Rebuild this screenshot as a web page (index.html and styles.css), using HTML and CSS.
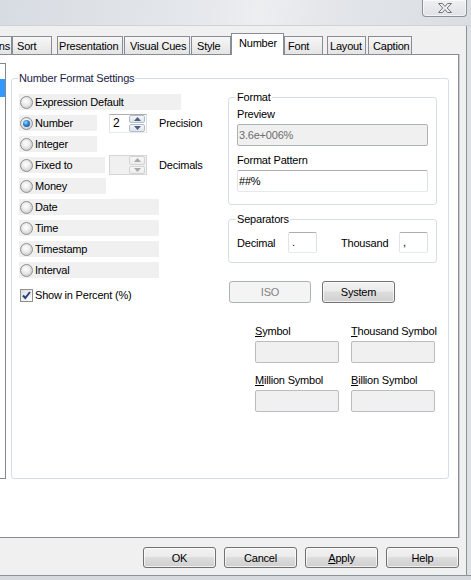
FILE: index.html
```html
<!DOCTYPE html>
<html>
<head>
<meta charset="utf-8">
<title>Number</title>
<link rel="stylesheet" href="styles.css">
</head>
<body>
<div class="window">
  <div class="titlebar">
    <div class="close">
      <svg width="14" height="10" viewBox="0 0 14 10"><path d="M0.5 0.5H4.5L7 3.5L9.5 0.5H13.5L9.2 5L13.5 9.5H9.5L7 6.5L4.5 9.5H0.5L4.8 5Z" fill="#eef0f2" stroke="#6f747b" stroke-width="1"/></svg>
    </div>
  </div>
  <div class="client">
    <div class="client-main">
      <div class="tabs">
        <div class="tab t-expr">Expressions</div>
        <div class="tab t-sort">Sort</div>
        <div class="tab t-pres">Presentation</div>
        <div class="tab t-vis">Visual Cues</div>
        <div class="tab t-style">Style</div>
        <div class="tab tab-active t-num">Number</div>
        <div class="tab t-font">Font</div>
        <div class="tab t-layout">Layout</div>
        <div class="tab t-cap">Caption</div>
      </div>
      <div class="page">
        <div class="listfrag"><div class="sel"></div></div>
        <div class="group main-group">
          <span class="group-title gt-main">Number Format Settings</span>
          <div class="left-col">
            <div class="row"><span class="opt w-expr"><span class="radio"></span>Expression Default</span></div>
            <div class="row">
              <span class="opt w-num"><span class="radio on"></span>Number</span>
              <div class="spin spin-num">
                <span class="spin-val">2</span>
                <span class="spin-btns">
                  <span class="spin-btn"><svg width="7" height="4" viewBox="0 0 7 4"><path d="M0 4L3.5 0L7 4Z"/></svg></span>
                  <span class="spin-btn"><svg width="7" height="4" viewBox="0 0 7 4"><path d="M0 0L3.5 4L7 0Z"/></svg></span>
                </span>
              </div>
              <span class="spin-label">Precision</span>
            </div>
            <div class="row"><span class="opt w-int"><span class="radio"></span>Integer</span></div>
            <div class="row">
              <span class="opt w-fixed"><span class="radio"></span>Fixed to</span>
              <div class="spin spin-fixed spin-dis">
                <span class="spin-val"></span>
                <span class="spin-btns">
                  <span class="spin-btn"><svg width="7" height="4" viewBox="0 0 7 4"><path d="M0 4L3.5 0L7 4Z"/></svg></span>
                  <span class="spin-btn"><svg width="7" height="4" viewBox="0 0 7 4"><path d="M0 0L3.5 4L7 0Z"/></svg></span>
                </span>
              </div>
              <span class="spin-label">Decimals</span>
            </div>
            <div class="row"><span class="opt w-money"><span class="radio"></span>Money</span></div>
            <div class="row"><span class="opt w-wide"><span class="radio"></span>Date</span></div>
            <div class="row"><span class="opt w-wide"><span class="radio"></span>Time</span></div>
            <div class="row"><span class="opt w-wide"><span class="radio"></span>Timestamp</span></div>
            <div class="row"><span class="opt w-wide"><span class="radio"></span>Interval</span></div>
            <div class="check-row">
              <span class="check"><svg width="11" height="11" viewBox="0 0 11 11"><path d="M2 5.5L4.3 8L9 2" fill="none" stroke="#253f7c" stroke-width="2"/></svg></span>
              <span>Show in Percent (%)</span>
            </div>
          </div>
          <div class="right-col">
            <div class="group fmt-group">
              <span class="group-title gt-sub">Format</span>
              <div class="lbl">Preview</div>
              <div class="tb tb-dis tb-wide">3.6e+006%</div>
              <div class="lbl lbl-2">Format Pattern</div>
              <div class="tb tb-wide">##%</div>
            </div>
            <div class="group sep-group">
              <span class="group-title gt-sub">Separators</span>
              <div class="sep-row">
                <span class="sep-lbl-dec">Decimal</span>
                <div class="tb tb-sep">.</div>
                <span class="sep-lbl-th">Thousand</span>
                <div class="tb tb-sep">,</div>
              </div>
            </div>
            <div class="mini-btns">
              <div class="btn btn-dis btn-iso">ISO</div>
              <div class="btn btn-sys">System</div>
            </div>
            <div class="sym-grid">
              <div class="sym-cell"><div class="lbl"><u>S</u>ymbol</div><div class="tb tb-sym"></div></div>
              <div class="sym-cell"><div class="lbl"><u>T</u>housand Symbol</div><div class="tb tb-sym"></div></div>
              <div class="sym-cell"><div class="lbl"><u>M</u>illion Symbol</div><div class="tb tb-sym"></div></div>
              <div class="sym-cell"><div class="lbl"><u>B</u>illion Symbol</div><div class="tb tb-sym"></div></div>
            </div>
          </div>
        </div>
      </div>
      <div class="buttons">
        <div class="btn btn-main">OK</div>
        <div class="btn btn-main">Cancel</div>
        <div class="btn btn-main"><span><u>A</u>pply</span></div>
        <div class="btn btn-main">Help</div>
      </div>
    </div>
    <div class="frame-right"></div>
  </div>
  <div class="frame-bottom"></div>
</div>
</body>
</html>
```
FILE: styles.css
```css
body {
  margin: 0;
  width: 471px;
  height: 580px;
  overflow: hidden;
  font-family: "Liberation Sans", Arial, sans-serif;
  font-size: 11px;
  letter-spacing: -0.2px;
  color: #000;
  background: #f0f0f0;
}

.window {
  width: 471px;
  height: 580px;
  display: flex;
  flex-direction: column;
}

.titlebar {
  height: 26px;
  flex: none;
  box-sizing: border-box;
  border-bottom: 1px solid #cfd3d8;
  background: linear-gradient(100deg, #d7dce2 0%, #e4e7eb 40%, #eceef0 55%, #e1e4e8 75%, #dadee3 100%);
  display: flex;
  justify-content: flex-end;
  align-items: flex-start;
  padding-right: 4px;
}

.close {
  width: 45px;
  height: 17px;
  box-sizing: border-box;
  border: 1px solid #8c9198;
  border-top: none;
  border-radius: 0 0 4px 4px;
  background: linear-gradient(#eef0f2, #dfe2e6);
  box-shadow: inset 0 0 0 1px rgba(255, 255, 255, 0.6);
  display: flex;
  align-items: center;
  justify-content: center;
}

.client {
  flex: 1;
  display: flex;
  min-height: 0;
}

.client-main {
  width: 466px;
  flex: none;
  display: flex;
  flex-direction: column;
  background: #f0f0f0;
}

.frame-right {
  flex: 1;
  border-left: 1px solid #8d9297;
  background: #dde0e4;
}

.frame-bottom {
  height: 5px;
  flex: none;
  box-sizing: border-box;
  border-top: 1px solid #8d9297;
  background: #d6d9dd;
}

/* tabs */
.tabs {
  height: 28px;
  flex: none;
  display: flex;
  align-items: flex-end;
}

.tab {
  box-sizing: border-box;
  height: 18px;
  flex: none;
  border: 1px solid #898c95;
  border-bottom: none;
  background: linear-gradient(#f7f7f7, #e4e4e4);
  padding-top: 3px;
  line-height: 13px;
  white-space: nowrap;
  overflow: hidden;
}

.tab-active {
  height: 22px;
  margin-bottom: -1px;
  background: #fff;
  position: relative;
  z-index: 1;
}

.t-expr { width: 72px; margin-left: -60px; text-align: right; padding-right: 1px; }
.t-sort { width: 40px; padding-left: 4px; }
.t-pres { width: 66px; margin-left: 5px; padding-left: 1px; }
.t-vis { width: 66px; margin-left: 1px; padding-left: 5px; }
.t-style { width: 40px; margin-left: 1px; padding-left: 5px; }
.t-num { width: 53px; padding-left: 7px; }
.t-font { width: 39px; padding-left: 3px; }
.t-layout { width: 39px; margin-left: 4px; padding-left: 2px; }
.t-cap { width: 44px; margin-left: 2px; padding-left: 4px; }

/* page */
.page {
  height: 484px;
  width: 459px;
  flex: none;
  box-sizing: border-box;
  background: #fff;
  border: 1px solid #898c95;
  border-left: none;
  box-shadow: 1px 0 0 #c9cbcf;
  display: flex;
  align-items: flex-start;
  padding-top: 8px;
}

.listfrag {
  width: 6px;
  height: 416px;
  flex: none;
  box-sizing: border-box;
  border: 1px solid #828790;
  border-left: none;
}

.listfrag .sel {
  width: 5px;
  height: 18px;
  margin-top: 15px;
  background: #3399ff;
}

.group {
  box-sizing: border-box;
  border: 1px solid #d5dfe5;
  border-radius: 3px;
  position: relative;
}

.group-title {
  position: absolute;
  top: -7px;
  background: #fff;
  padding: 0 1px;
  line-height: 13px;
  white-space: nowrap;
}

.gt-main { left: 6px; color: #1b1b47; }
.gt-sub { left: 7px; }

.main-group {
  width: 438px;
  height: 401px;
  flex: none;
  margin-left: 5px;
  margin-top: 15px;
  padding-left: 7px;
  display: flex;
}

.left-col {
  width: 209px;
  flex: none;
  padding-top: 15px;
}

.right-col {
  width: 209px;
  flex: none;
  padding-top: 18px;
}

/* radio rows */
.row {
  display: flex;
  align-items: center;
  height: 16px;
  margin-bottom: 5px;
}

.opt {
  height: 16px;
  flex: none;
  box-sizing: border-box;
  display: flex;
  align-items: center;
  background: #f0f0f0;
  padding-left: 1px;
  white-space: nowrap;
}

.w-expr { width: 162px; }
.w-num { width: 78px; }
.w-int { width: 78px; }
.w-fixed { width: 86px; }
.w-money { width: 87px; }
.w-wide { width: 140px; }

.radio {
  width: 13px;
  height: 13px;
  flex: none;
  box-sizing: border-box;
  border-radius: 50%;
  border: 1px solid #8e8f8f;
  background: radial-gradient(circle at 45% 40%, #ffffff 0, #f2f2f2 30%, #d4d4d4 70%, #ececec 100%);
  margin-right: 2px;
  display: flex;
  align-items: center;
  justify-content: center;
}

.radio.on::after {
  content: "";
  width: 7px;
  height: 7px;
  border-radius: 50%;
  background: radial-gradient(circle at 40% 35%, #9fd8ff 0, #2b83d6 45%, #103c74 100%);
}

.check-row {
  display: flex;
  align-items: center;
  height: 16px;
  margin-top: 9px;
  padding-left: 1px;
}

.check {
  width: 13px;
  height: 13px;
  box-sizing: border-box;
  border: 1px solid #8e8f8f;
  background: linear-gradient(135deg, #dcdcdc, #ffffff);
  margin-right: 2px;
  display: flex;
  align-items: center;
  justify-content: center;
}

/* spinner */
.spin {
  width: 38px;
  height: 19px;
  flex: none;
  box-sizing: border-box;
  border: 1px solid;
  border-color: #abadb3 #dbdfe6 #e3e9ef #e2e3ea;
  background: #fff;
  display: flex;
}

.spin-num { margin-left: 12px; }
.spin-fixed { margin-left: 4px; height: 20px; }

.spin-val {
  flex: 1;
  padding-left: 3px;
  line-height: 17px;
  font-size: 12px;
}

.spin-btns {
  width: 16px;
  display: flex;
  flex-direction: column;
  gap: 1px;
  padding: 0 1px 0 0;
}

.spin-btn {
  flex: 1;
  box-sizing: border-box;
  border: 1px solid #b6bcc6;
  border-radius: 2px;
  background: linear-gradient(#f5f7fa, #dfe5ec);
  display: flex;
  align-items: center;
  justify-content: center;
}

.spin-btn svg { fill: #4b5d85; }

.spin-dis {
  background: #f0f0f0;
  border-color: #d5d5d5;
}

.spin-dis .spin-btn {
  border-color: #d3d3d3;
  background: linear-gradient(#f7f7f7, #ececec);
}

.spin-dis .spin-btn svg { fill: #a8a8a8; }

.spin-label {
  margin-left: 12px;
  white-space: nowrap;
}

/* text boxes */
.tb {
  box-sizing: border-box;
  height: 22px;
  border: 1px solid;
  border-color: #abadb3 #dbdfe6 #e3e9ef #e2e3ea;
  border-radius: 2px;
  background: #fff;
  padding-left: 1px;
  line-height: 20px;
  white-space: nowrap;
}

.tb-dis {
  background: #f0f0f0;
  border-color: #adb2b5;
  color: #6d6d6d;
}

.tb-wide { width: 191px; }

.lbl {
  line-height: 13px;
  margin-bottom: 3px;
  white-space: nowrap;
}

.lbl-2 { margin-top: 8px; }

.fmt-group {
  width: 209px;
  height: 108px;
  padding: 10px 0 0 8px;
}

.sep-group {
  width: 209px;
  height: 44px;
  margin-top: 14px;
  padding: 12px 0 0 8px;
}

.sep-row {
  display: flex;
  align-items: center;
  height: 21px;
}

.sep-lbl-dec { width: 51px; flex: none; }
.sep-lbl-th { width: 58px; flex: none; margin-left: 24px; }

.tb-sep {
  width: 29px;
  height: 21px;
  flex: none;
  padding-left: 3px;
  line-height: 19px;
}

/* buttons */
.btn {
  box-sizing: border-box;
  height: 21px;
  border: 1px solid #707070;
  border-radius: 3px;
  background: linear-gradient(#f2f2f2 0%, #ebebeb 45%, #dddddd 50%, #cfcfcf 100%);
  box-shadow: inset 0 0 0 1px rgba(255, 255, 255, 0.7);
  display: flex;
  align-items: center;
  justify-content: center;
  white-space: nowrap;
}

.btn-dis {
  border-color: #adb2b5;
  background: #f4f4f4;
  color: #838383;
  box-shadow: none;
}

.mini-btns {
  display: flex;
  margin-top: 18px;
  height: 22px;
}

.btn-iso { width: 82px; height: 22px; margin-left: 1px; }
.btn-sys { width: 73px; height: 22px; margin-left: 11px; }

.sym-grid {
  display: grid;
  grid-template-columns: 84px 84px;
  column-gap: 12px;
  row-gap: 11px;
  margin-top: 22px;
  margin-left: 27px;
}

.tb-sym {
  width: 84px;
  background: #f0f0f0;
  border-color: #b9bcc0;
}

.buttons {
  display: flex;
  justify-content: flex-end;
  gap: 8px;
  margin-top: 9px;
  padding-right: 7px;
  height: 21px;
}

.btn-main { width: 73px; }
```
